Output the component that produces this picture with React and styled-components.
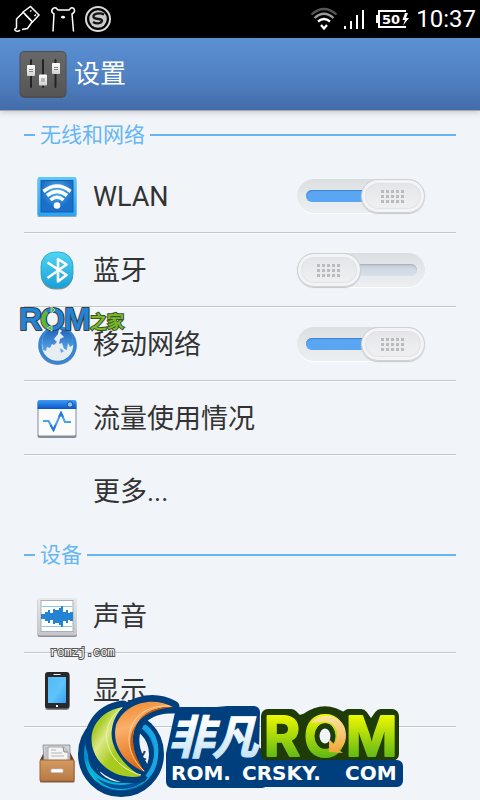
import React, { useState } from "react";
import styled, { createGlobalStyle } from "styled-components";

const GlobalStyle = createGlobalStyle`
  *, *::before, *::after { box-sizing: border-box; }
  body {
    margin: 0;
    background: #f1f5fa;
    color: #333;
    font-family: Roboto, "Noto Sans CJK SC", sans-serif;
  }
`;

const Page = styled.div`
  position: relative;
  min-height: 100vh;
  overflow: hidden;
  background: #f1f5fa;
`;

const StatusBar = styled.div`
  display: flex;
  align-items: center;
  justify-content: space-between;
  height: 38px;
  padding: 0 4px 0 12px;
  background: #000;
  color: #fff;
`;

const StatusGroup = styled.div`
  display: flex;
  align-items: center;
  gap: ${(p) => p.$gap}px;
`;

const Clock = styled.time`
  font-size: 24px;
  line-height: 38px;
`;

const AppBar = styled.header`
  display: flex;
  align-items: center;
  gap: 6px;
  height: 73px;
  padding-left: 19px;
  background: linear-gradient(#5b90d2, #5183c5 50%, #446ca9);
  border-bottom: 1px solid #a3a6ab;
  box-shadow: 0 1px 6px rgba(60, 70, 80, 0.28);
`;

const Title = styled.h1`
  margin: 0;
  color: #fff;
  font-size: 26px;
  font-weight: 400;
  line-height: 40px;
`;

const Settings = styled.main`
  padding: 0 24px;
`;

const Section = styled.section`
  & + & { padding-top: 4px; }
`;

const SectionTitle = styled.h2`
  display: flex;
  align-items: center;
  gap: 5px;
  height: 48px;
  margin: 0;
  color: #67b5f3;
  font-size: 21px;
  font-weight: 400;
  line-height: 48px;
  &::before, &::after {
    content: "";
    width: 11px;
    height: 2px;
    background: #67b5f3;
  }
  &::after { width: auto; flex: 1; }
`;

const List = styled.ul`
  margin: 0;
  padding: 0;
  list-style: none;
`;

const Row = styled.li`
  display: flex;
  align-items: center;
  height: 74px;
  padding: 0 31px 0 12px;
  border-bottom: 1px solid #c3c6cb;
  box-shadow: 0 1px 0 #fafcfe;
  &:last-child {
    height: 72px;
    border-bottom: 0;
    box-shadow: none;
  }
`;

const IconSlot = styled.span`
  display: flex;
  width: 42px;
  height: 42px;
  margin-right: 15px;
`;

const Label = styled.label`
  flex: 1;
  padding-top: 2px;
  font-size: 27px;
  line-height: 40px;
`;

const LinkLabel = styled.a`
  flex: 1;
  padding-top: 2px;
  color: inherit;
  font-size: 27px;
  line-height: 40px;
  text-decoration: none;
`;

const Switch = styled.input`
  appearance: none;
  position: relative;
  width: 128px;
  height: 34px;
  margin: 0;
  border-radius: 17px;
  background: linear-gradient(#dcdfe2, #e6e9ec 50%, #eceff2);
  box-shadow: 0 1px 0 #fff;
  cursor: pointer;
  &::before {
    content: "";
    position: absolute;
    inset: 11px 8px 11px 9px;
    border-radius: 6px;
    background: linear-gradient(#bfc8d4, #cfd8e3 40%, #d8e0ea);
    box-shadow: inset 0 1px 1px #a9b1bb;
  }
  &:checked::before {
    background: #5ba6f2;
    box-shadow: inset 0 1px 1px #3c82cc;
  }
  &::after {
    content: "";
    position: absolute;
    top: 0;
    left: 0;
    width: 64px;
    height: 34px;
    border: 1px solid #cfd1d5;
    border-radius: 17px;
    background:
      repeating-linear-gradient(90deg, transparent 0 3px, #e9ebed 3px 5px) 19px 10px / 23px 13px no-repeat,
      repeating-linear-gradient(#b9bbbe 0 3px, #e9ebed 3px 5px) 19px 10px / 23px 13px no-repeat,
      linear-gradient(#e2e4e7, #f1f2f4);
    box-shadow: inset 0 0 0 3px #f3f4f6, inset 0 0 1px 4px #e0e2e5, 0 1px 1px #c4c7cc;
  }
  &:checked::after { left: auto; right: 0; }
`;

const Overlay = styled.svg`
  position: absolute;
  overflow: visible;
  pointer-events: none;
  left: ${(p) => p.$left}px;
  top: ${(p) => p.$top}px;
`;

const svgProps = { width: 42, height: 42, viewBox: "0 0 42 42", "aria-hidden": true };

function UsbIcon() {
  return (
    <svg width="30" height="28" viewBox="12 5 30 28" fill="none" stroke="#fff" strokeWidth="1.5" aria-hidden="true">
      <path d="M23 12 30.500 6.500 39 15 32.500 22ZM23 12.500 16.500 19V27.500L15.500 29M32 22 27.500 28.500 22 29.500M20 30C18 32.500 14 31 15 28.500" />
      <path d="m30 11.500 1.500-1M34.500 16l1.500-1.500M25 14.500l6.500 6.500" />
    </svg>
  );
}

function BearIcon() {
  return (
    <svg width="26" height="28" viewBox="50 5 26 28" fill="none" stroke="#fff" strokeWidth="1.5" aria-hidden="true">
      <path d="M53 31.500 54 14C50 12 52 7 56 8L58 10H69L71 8C75 7 76 12 72 14L73.500 31.500" />
      <ellipse cx="63" cy="17.200" rx="2" ry="1.400" fill="#fff" stroke="none" />
    </svg>
  );
}

function SIcon() {
  return (
    <svg width="28" height="28" viewBox="85 5 28 28" aria-hidden="true">
      <circle cx="99" cy="19" r="12" fill="none" stroke="#d8d8d8" strokeWidth="2" />
      <circle cx="99" cy="19" r="8.800" fill="#c9c9c9" />
      <path d="M105 14.500C100 12 94 14 94.500 17S104 18 103 21s-6 3-9 1" fill="none" stroke="#141414" strokeWidth="2.300" />
    </svg>
  );
}

function WifiStatus() {
  return (
    <svg width="28" height="24" viewBox="311 7 28 24" fill="none" strokeWidth="2.300" aria-hidden="true">
      <path d="M312.500 14.500Q325 3.500 337.500 14.500" stroke="#555" />
      <path d="M315.500 18Q325 9.500 334.500 18" stroke="#999" />
      <path d="M319 21.500Q325 16.500 331 21.500" stroke="#fff" />
      <path d="m322 25 3 3.500 3-3.500" stroke="#fff" />
    </svg>
  );
}

function SignalStatus() {
  return (
    <svg width="26" height="20" viewBox="344 11 26 20" fill="#fff" aria-hidden="true">
      <path d="M344 28h2v3h-2zM350 23h2v8h-2zM356 17h2v14h-2zM362 12h2v19h-2z" />
    </svg>
  );
}

function BatteryStatus() {
  return (
    <svg width="34" height="20" viewBox="376 10 34 20" aria-label="50%">
      <path d="M406 12H379V28H406" fill="none" stroke="#fff" strokeWidth="2" />
      <path d="M376 16h2v8h-2zM405 14 402.500 21h2.500l-2 5.500 6-7.500h-3l2-5z" fill="#fff" />
      <text x="382" y="25" fill="#fff" fontFamily="DejaVu Sans, sans-serif" fontWeight="700" fontSize="13">50</text>
    </svg>
  );
}

function MixerIcon() {
  return (
    <svg width="49" height="49" viewBox="19 50 49 49" aria-hidden="true">
      <defs>
        <linearGradient id="mix" x2="0" y2="1"><stop stopColor="#686868" /><stop offset="1" stopColor="#565656" /></linearGradient>
        <linearGradient id="knob" x2="0" y2="1"><stop stopColor="#fff" /><stop offset="1" stopColor="#d0d0d0" /></linearGradient>
      </defs>
      <rect x="19.500" y="51" width="47" height="47" rx="5" fill="#4e4e50" />
      <rect x="20.500" y="52" width="45" height="44" rx="4" fill="url(#mix)" />
      <path d="M31 60v27M43 60v27M55.500 60v27" stroke="#242424" strokeWidth="2" strokeLinecap="round" />
      <g fill="url(#knob)">
        <rect x="27" y="65" width="8" height="11" rx="1" />
        <rect x="39" y="74.500" width="8" height="11" rx="1" />
        <rect x="52" y="63" width="8" height="11" rx="1" />
      </g>
      <path d="M29 69.500h4M29 71.500h4M41 79h4M41 81h4M54 67.500h4M54 69.500h4" stroke="#888" />
    </svg>
  );
}

function WlanIcon() {
  return (
    <svg {...svgProps}>
      <defs>
        <linearGradient id="wl" x2="0" y2="1"><stop stopColor="#5cc9fa" /><stop offset="1" stopColor="#2ba3f4" /></linearGradient>
        <radialGradient id="wi" cy=".35"><stop stopColor="#55b6ee" /><stop offset="1" stopColor="#1b6fc8" /></radialGradient>
      </defs>
      <rect x="1.500" y="3.500" width="39" height="39" rx="2" fill="#9da5ad" />
      <rect x="1.500" y="2" width="39" height="39" rx="2" fill="url(#wl)" />
      <rect x="5" y="5.500" width="32" height="31.500" fill="url(#wi)" stroke="#185ca8" />
      <g fill="none" stroke="#fff" strokeWidth="3.600">
        <path d="M7.500 16.500Q21 5.500 34.500 16.500" />
        <path d="M11 20.500Q21 12.500 31 20.500" />
        <path d="M14.500 25Q21 19.500 27.500 25" />
      </g>
      <circle cx="21" cy="30.500" r="3.300" fill="#fff" />
    </svg>
  );
}

function BluetoothIcon() {
  return (
    <svg {...svgProps}>
      <defs><linearGradient id="bt" x2="0" y2="1"><stop stopColor="#50d5f1" /><stop offset="1" stopColor="#1aa0d8" /></linearGradient></defs>
      <rect x="5" y="4.500" width="32" height="36" rx="14" fill="#87939b" />
      <rect x="5" y="3" width="32" height="36" rx="14" fill="url(#bt)" stroke="#23a1c9" strokeWidth=".8" />
      <path d="M11.500 13.500 30.500 26 22 32.500V10L30.500 15.500 11.500 29" fill="none" stroke="#fff" strokeWidth="2.600" strokeLinejoin="round" />
    </svg>
  );
}

function GlobeIcon() {
  return (
    <svg {...svgProps}>
      <defs><linearGradient id="gl" x2="0" y2="1"><stop stopColor="#1e63b8" /><stop offset="1" stopColor="#58a6e8" /></linearGradient></defs>
      <circle cx="21.500" cy="23" r="19" fill="#7f8b99" />
      <circle cx="21.500" cy="22" r="17.500" fill="#e8edf1" stroke="#3586d4" strokeWidth="3.500" />
      <path d="M6 20C7 10 14 5 23 6l-1 5-4 5 3 3-3 3-2-1-2 4-3-1-1 4-3-1Z" fill="url(#gl)" />
      <path d="M24 6c9 0 14 7 13 16l-3 2-2-4-1 7-3-1-2-6-3 1 1-5 4-2-4-4 2-2Z" fill="url(#gl)" />
      <path d="m24 25 4 3-3 2Z" fill="#58a6e8" />
    </svg>
  );
}

function DataIcon() {
  return (
    <svg {...svgProps}>
      <defs><linearGradient id="da" x2="0" y2="1"><stop stopColor="#3d9df2" /><stop offset="1" stopColor="#0a55ca" /></linearGradient></defs>
      <rect x="1.500" y="4" width="39" height="37" rx="2" fill="#868c98" />
      <rect x="2.500" y="5" width="37" height="33.500" rx="1" fill="#fbfbfb" />
      <path d="M1.500 12V5a2 2 0 0 1 2-2h35a2 2 0 0 1 2 2v7Z" fill="url(#da)" />
      <circle cx="34" cy="7.500" r="2.800" fill="#8fbdf0" stroke="#1550a0" />
      <path d="M7 24h5.500L17.500 33 25 16l4 9h6" fill="none" stroke="#46a0f0" strokeWidth="2" />
      <path d="m14.500 28 3 5 2-5M23 20l2-4 2 4" fill="none" stroke="#2579dd" strokeWidth="2" />
    </svg>
  );
}

function SoundIcon() {
  return (
    <svg {...svgProps}>
      <defs><linearGradient id="so" x2="0" y2="1"><stop stopColor="#e8e9eb" /><stop offset="1" stopColor="#c5c6ca" /></linearGradient></defs>
      <rect x="1.500" y="4" width="39.500" height="38" rx="2" fill="#8e9096" />
      <rect x="1.500" y="3" width="39.500" height="37.500" rx="2" fill="url(#so)" />
      <rect x="5" y="5.500" width="32" height="31" fill="#fff" stroke="#abaeb4" />
      <path d="M6 11.500h30M6 31.500h30" stroke="#8bc5ed" />
      <path d="M5 19h4v-2h3v-2h2v3h3v-4h2v1h4v-2h2v-2h2v6h3v-2h2v3h2v-1h3v9h-3v-1h-2v3h-2v-2h-3v6h-2v-2h-2v-2h-4v1h-2v-4h-3v3h-2v-2H9v-2H5Z" fill="#2583d3" />
    </svg>
  );
}

function PhoneIcon() {
  return (
    <svg {...svgProps}>
      <defs><linearGradient id="ph" x2="1" y2="1"><stop stopColor="#55b9f6" /><stop offset=".55" stopColor="#5fc3fb" /><stop offset="1" stopColor="#31a2ef" /></linearGradient></defs>
      <rect x="9" y="4" width="24.500" height="37" rx="3" fill="#84878c" />
      <rect x="9" y="3" width="24.500" height="36.500" rx="3" fill="#29292c" />
      <rect x="12" y="8" width="18" height="26" fill="url(#ph)" />
      <path d="M17.500 5.500h7" stroke="#eee" /><rect x="20" y="36" width="2" height="2" fill="#fff" />
    </svg>
  );
}

function DrawerIcon() {
  return (
    <svg {...svgProps}>
      <defs><linearGradient id="dr" x2="0" y2="1"><stop stopColor="#d39a62" /><stop offset="1" stopColor="#b77a42" /></linearGradient></defs>
      <path d="M4 18 8 10h26l4 8Z" fill="#664027" />
      <path d="M7 3h27v16H8Z" fill="#d2d3d5" stroke="#85888b" strokeWidth=".8" />
      <path d="M12 5h16l4 5v9H12Z" fill="#f3f4f5" stroke="#999" strokeWidth=".8" />
      <path d="M15 8h5M15 11h11M15 14h13M10 5v13" stroke="#b3b6b8" />
      <path d="m27 5 1 5h4" fill="#ccc" stroke="#888" />
      <rect x="4" y="18" width="34.500" height="22.500" rx="1" fill="#7d5b3f" />
      <rect x="4" y="18" width="34" height="21" rx="1" fill="url(#dr)" stroke="#9e6431" />
      <rect x="15" y="27" width="12" height="3.500" rx="1" fill="#fff" stroke="#b7c9d5" strokeWidth=".7" />
    </svg>
  );
}

function RomHomeMark() {
  return (
    <Overlay $left={16} $top={296} width="114" height="46" viewBox="16 296 114 46">
      <g fontFamily="Liberation Sans, sans-serif" fontWeight="700" fontSize="32" fill="#2583d3" stroke="#3a3f45" strokeWidth="2" paintOrder="stroke" strokeLinejoin="round">
        <text x="19" y="330">R</text>
        <text x="40" y="330">O</text>
        <text x="64" y="330">M</text>
      </g>
      <path d="M47 312C42 316 42 323 47 327" fill="none" stroke="#62b82c" strokeWidth="4" />
      <path d="m51 306 4 4-4 4ZM52 325v6l-5-3Z" fill="#62b82c" stroke="#f1f5fa" strokeWidth=".6" />
      <text x="90" y="328" fontFamily="Noto Sans CJK SC, sans-serif" fontWeight="700" fontSize="17" fill="#79b829" stroke="#40502d" strokeWidth="2" paintOrder="stroke">之家</text>
    </Overlay>
  );
}

function SiteMark() {
  return (
    <Overlay $left={48} $top={642} width="72" height="20" viewBox="48 642 72 20">
      <text x="50" y="656" fontFamily="Liberation Mono, monospace" fontSize="12" fill="#fff" stroke="#555" strokeWidth="2" paintOrder="stroke">romzj.com</text>
    </Overlay>
  );
}

function CrskyMark() {
  const green = "M123 707C98 711 86 732 94 752C101 770 122 780 141 776C122 765 109 745 112 729C113 721 117 713 123 707Z";
  const orange = "M173 707C151 695 124 704 116 725C111 746 126 765 145 772C134 758 130 741 135 728C141 712 158 706 173 707Z";
  return (
    <Overlay $left={76} $top={690} width="330" height="110" viewBox="76 690 330 110">
      <defs>
        <linearGradient id="cg" gradientUnits="userSpaceOnUse" x1="94" x2="118" y1="732" y2="748"><stop stopColor="#a9cc2b" /><stop offset=".4" stopColor="#dce986" /><stop offset="1" stopColor="#a8cb20" /></linearGradient>
        <linearGradient id="co" gradientUnits="userSpaceOnUse" x1="122" x2="142" y1="704" y2="768"><stop stopColor="#ef8931" /><stop offset=".35" stopColor="#fbb06a" /><stop offset="1" stopColor="#dd680f" /></linearGradient>
        <linearGradient id="cb" x2="0" y2="1"><stop stopColor="#18a7e5" /><stop offset=".55" stopColor="#078bd0" /><stop offset=".85" stopColor="#0ccbdc" /><stop offset="1" stopColor="#0763ac" /></linearGradient>
        <linearGradient id="cw" x2="0" y2="1"><stop offset=".3" stopColor="#fff" /><stop offset="1" stopColor="#b6dcf5" /></linearGradient>
        <linearGradient id="cr" gradientUnits="userSpaceOnUse" x1="0" x2="0" y1="714" y2="757"><stop stopColor="#f1fa00" /><stop offset="1" stopColor="#62b916" /></linearGradient>
        <linearGradient id="ca" x2="0" y2="1"><stop stopColor="#ffe3a0" /><stop offset="1" stopColor="#efa637" /></linearGradient>
      </defs>
      <circle cx="121" cy="754" r="35.500" fill="none" stroke="#003f7d" strokeWidth="15" />
      <circle cx="121" cy="754" r="35" fill="none" stroke="url(#cb)" strokeWidth="4" />
      <path d="M88 762C99 787 138 791 153 767C142 799 94 798 88 762Z" fill="#08b4d5" />
      <path d="M96 777C110 788 134 787 147 777C136 792 109 794 96 777Z" fill="#07509b" />
      <path d={green} fill="#003f7d" stroke="#003f7d" strokeWidth="13" strokeLinejoin="round" />
      <path d={orange} fill="#003f7d" stroke="#003f7d" strokeWidth="13" strokeLinejoin="round" />
      <path d={green} fill="url(#cg)" />
      <path d="M122 708C97 724 102 764 141 775" fill="none" stroke="#eef5b5" />
      <path d={orange} fill="url(#co)" />
      <path d="M173 707C158 706 141 712 135 728C130 741 134 758 145 772C123 755 121 712 173 707Z" fill="#cb5b0b" />
      <path d="M170 706C127 704 117 746 144 771" fill="none" stroke="#ffd4a1" />
      <path d="M144 726C160 737 160 761 147 777" fill="none" stroke="#18a7e5" strokeWidth="4" />
      <path d="M181 713H217L228 712H254L253 750 262 757V782H172V754Z" fill="#003f7d" stroke="#003f7d" strokeWidth="12" strokeLinejoin="round" />
      <g fontFamily="Noto Sans CJK SC, sans-serif" fontWeight="700" fontStyle="italic" fontSize="46" fill="url(#cw)" stroke="url(#cw)">
        <text x="168" y="754">非</text>
        <text x="212" y="754">凡</text>
      </g>
      <path d="M268 716H291L298 723 307 720Q325 707 343 720L349 716H361L371 730 381 716H392V754H268Z" fill="#1e3b08" stroke="#1e3b08" strokeWidth="14" strokeLinejoin="round" />
      <path d="M250 766H397V781H250Z" fill="#003f7d" stroke="#003f7d" strokeWidth="12" strokeLinejoin="round" />
      <g fontFamily="Inter, sans-serif" fontWeight="700" fontSize="55" fill="url(#cr)" stroke="url(#cr)" strokeWidth="2" strokeLinejoin="round">
        <text x="264" y="756">R</text>
        <text x="304" y="756">O</text>
        <text x="346" y="756">M</text>
      </g>
      <ellipse cx="325" cy="736" rx="8" ry="10" fill="#f1f5fa" stroke="#1e3b08" strokeWidth="5" />
      <path d="M311 723C320 711 346 714 346 735C346 743 343 747 339 750L343 753 329 752 329 739 334 744C340 735 337 724 327 722C321 721 315 723 311 723Z" fill="url(#ca)" />
      <g fontFamily="DejaVu Sans, sans-serif" fontWeight="700" fontSize="20" fill="#fff">
        <text x="171" y="780">ROM.</text>
        <text x="242" y="780">CRSKY.</text>
        <text x="345" y="780">COM</text>
      </g>
    </Overlay>
  );
}

const sections = [
  {
    title: "无线和网络",
    rows: [
      { id: "wlan", label: "WLAN", Icon: WlanIcon, toggle: true, on: true },
      { id: "bluetooth", label: "蓝牙", Icon: BluetoothIcon, toggle: true, on: false },
      { id: "mobile", label: "移动网络", Icon: GlobeIcon, toggle: true, on: true },
      { id: "data", label: "流量使用情况", Icon: DataIcon },
      { id: "more", label: "更多..." },
    ],
  },
  {
    title: "设备",
    rows: [
      { id: "sound", label: "声音", Icon: SoundIcon },
      { id: "display", label: "显示", Icon: PhoneIcon },
      { id: "storage", label: "存储", Icon: DrawerIcon },
    ],
  },
];

function SettingRow({ id, label, Icon, toggle, on }) {
  const [checked, setChecked] = useState(Boolean(on));
  return (
    <Row>
      <IconSlot>{Icon && <Icon />}</IconSlot>
      {toggle ? (
        <>
          <Label htmlFor={id}>{label}</Label>
          <Switch id={id} type="checkbox" role="switch" checked={checked} onChange={(e) => setChecked(e.target.checked)} />
        </>
      ) : (
        <LinkLabel href={`#${id}`}>{label}</LinkLabel>
      )}
    </Row>
  );
}

export default function App() {
  return (
    <Page>
      <GlobalStyle />
      <StatusBar>
        <StatusGroup $gap={8}>
          <UsbIcon />
          <BearIcon />
          <SIcon />
        </StatusGroup>
        <StatusGroup $gap={6}>
          <WifiStatus />
          <SignalStatus />
          <BatteryStatus />
          <Clock>10:37</Clock>
        </StatusGroup>
      </StatusBar>
      <AppBar>
        <MixerIcon />
        <Title>设置</Title>
      </AppBar>
      <Settings>
        {sections.map((section) => (
          <Section key={section.title}>
            <SectionTitle>{section.title}</SectionTitle>
            <List>
              {section.rows.map((row) => <SettingRow key={row.id} {...row} />)}
            </List>
          </Section>
        ))}
      </Settings>
      <RomHomeMark />
      <SiteMark />
      <CrskyMark />
    </Page>
  );
}
